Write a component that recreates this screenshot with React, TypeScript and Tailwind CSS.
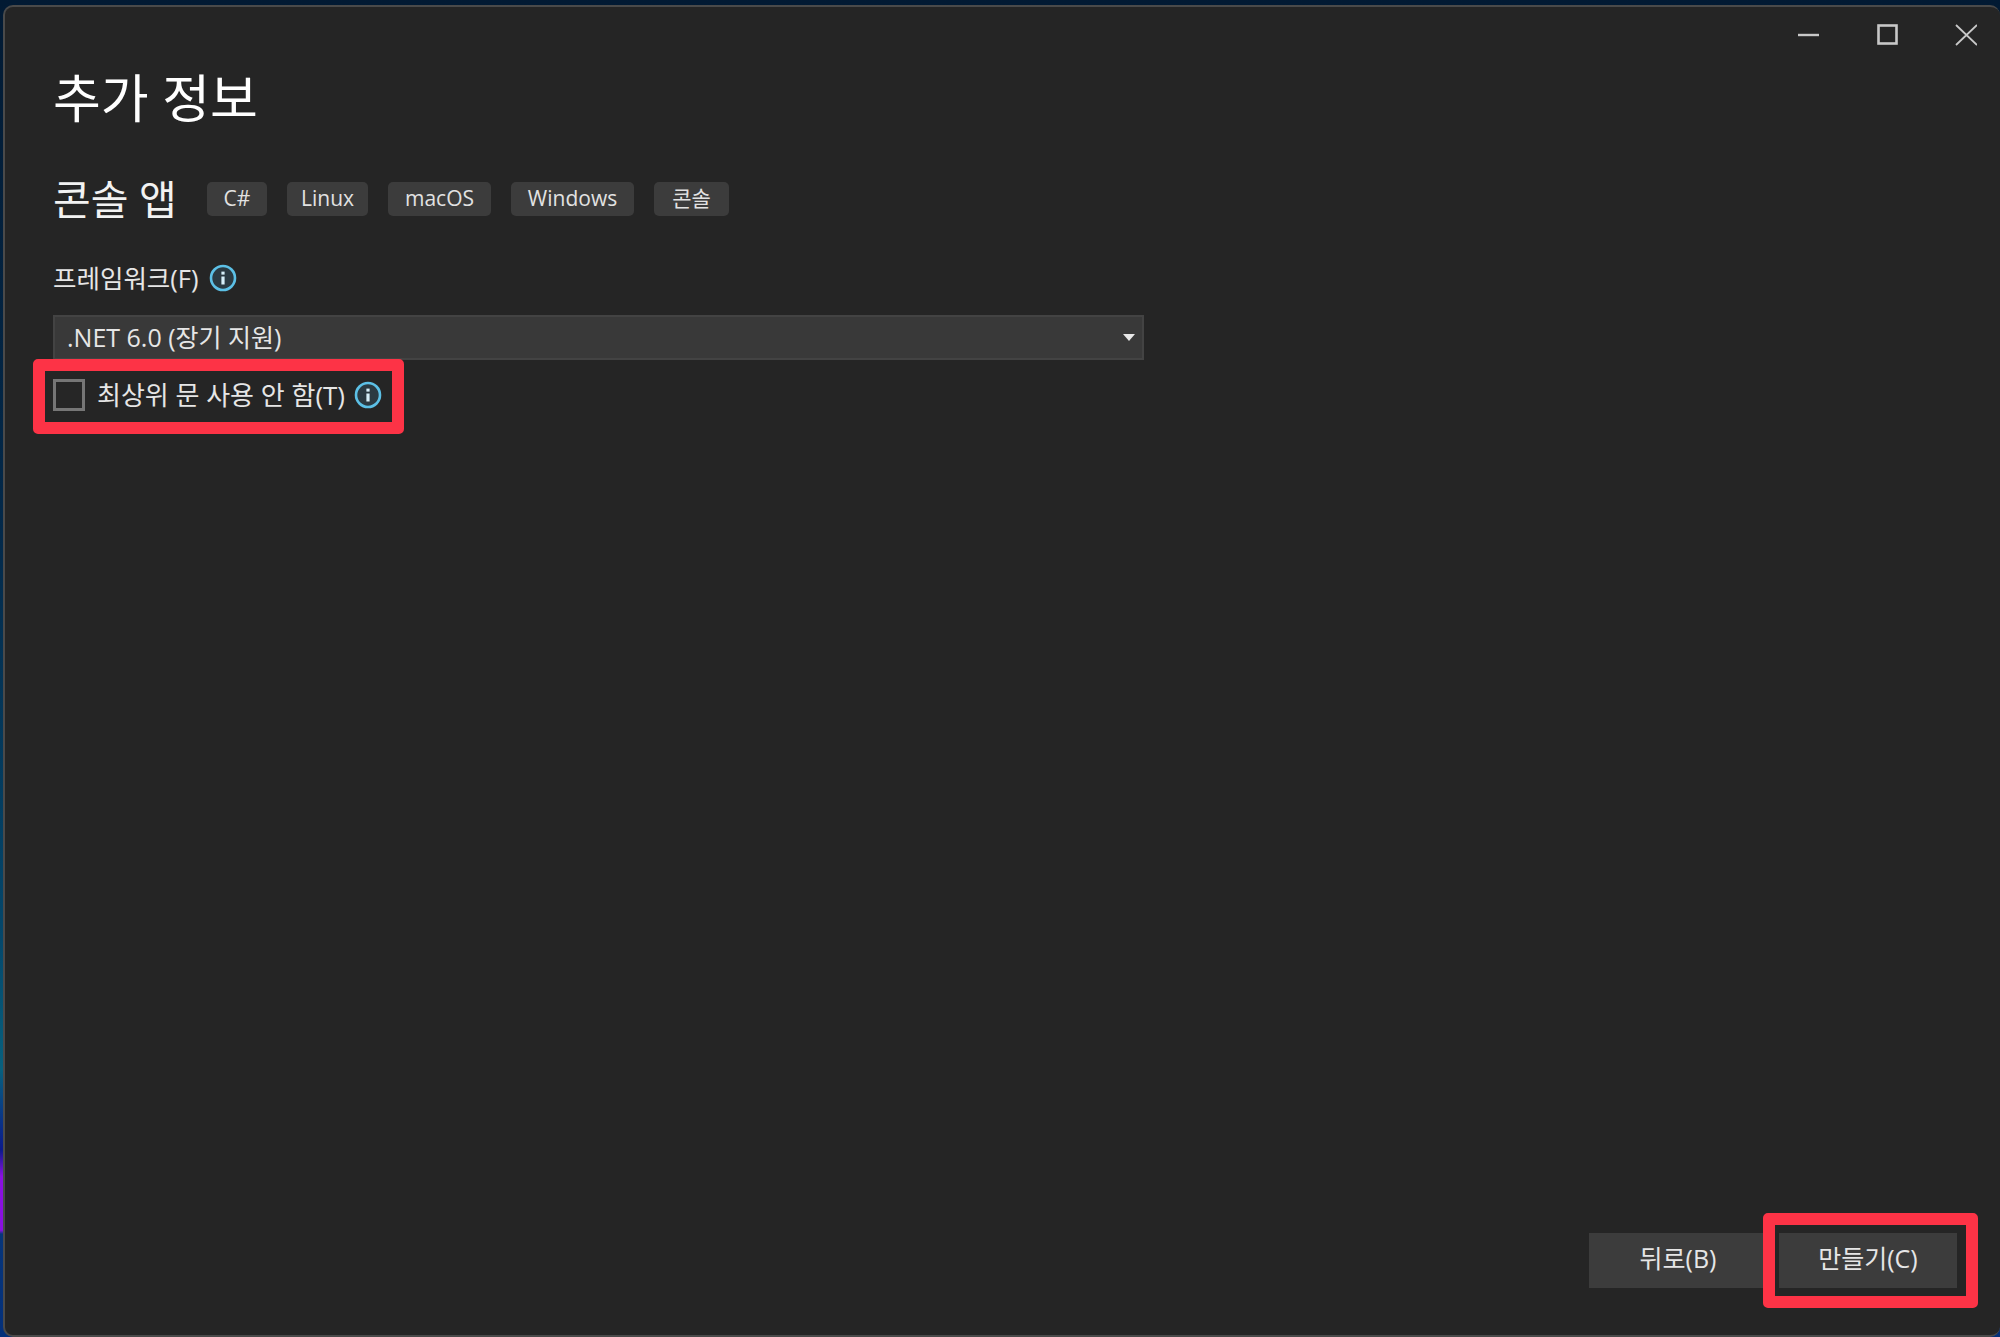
const sans = "font-['Open_Sans','Noto_Sans_CJK_KR',sans-serif]";

function InfoIcon() {
  return (
    <svg width="28" height="28" viewBox="0 0 28 28" className="shrink-0">
      <circle cx="14" cy="14" r="12" fill="#2b3a42" stroke="#5cc0e6" strokeWidth="2.6" />
      <rect x="12.4" y="12.5" width="3.2" height="8" fill="#d6eef8" />
      <rect x="12.4" y="7.6" width="3.2" height="3" fill="#d6eef8" />
    </svg>
  );
}

function Tag({ label, width }: { label: string; width: string }) {
  return (
    <span className={`flex h-[34px] items-center justify-center rounded-[5px] bg-[#3c3c3c] text-[21px] text-[#e2e2e2] ${width}`}>
      {label}
    </span>
  );
}

export default function App() {
  return (
    <div className={`h-[1337px] w-[2000px] overflow-hidden bg-[linear-gradient(180deg,#021a33_0%,#03294a_40%,#04476b_70%,#07607e_80%,#0a1a8c_86%,#8a10e0_88%,#8a10e0_92%,#06357a_92.3%,#04307a_100%)] pl-[3px] pt-[5px] ${sans}`}>
      <div className="flex h-[1332px] flex-col rounded-[10px] border-t-2 border-b-2 border-l-2 border-[#4a4a4a] bg-[#252525] text-[#e6e6e6]">
        <div className="flex justify-end pr-[23px] pt-[17px]">
          <svg width="179" height="22" viewBox="0 0 179 22" className="text-[#c8c8c8]" fill="none" stroke="currentColor">
            <path d="M0 11H21" strokeWidth="2.4" />
            <rect x="80.5" y="1.5" width="18" height="18" strokeWidth="2.6" />
            <path d="M158 1L179 21M179 1L158 21" strokeWidth="1.8" />
          </svg>
        </div>

        <div className="flex flex-1 flex-col pl-[48px]">
          <h1 className="mt-[17px] h-[70px] text-[52px] leading-[70px] font-normal text-white">추가 정보</h1>

          <div className="mt-[46px] flex h-[40px] items-center">
            <h2 className="w-[154px] text-[41px] leading-[40px] font-normal text-[#f2f2f2]">콘솔 앱</h2>
            <div className="flex gap-[20px]">
              <Tag label="C#" width="w-[60px]" />
              <Tag label="Linux" width="w-[81px]" />
              <Tag label="macOS" width="w-[103px]" />
              <Tag label="Windows" width="w-[123px]" />
              <Tag label="콘솔" width="w-[75px]" />
            </div>
          </div>

          <div className="mt-[45px] flex h-[28px] items-center gap-[10px] text-[25.5px]">
            <span>프레임워크(F)</span>
            <InfoIcon />
          </div>

          <div className="mt-[23px] flex h-[45px] w-[1091px] items-center justify-between border-2 border-[#434343] bg-[#393939] pl-[12px] pr-[7px] text-[25px]">
            <span>.NET 6.0 (장기 지원)</span>
            <svg width="12" height="7" viewBox="0 0 12 7"><path d="M0 0H12L6 7Z" fill="#e8e8e8" /></svg>
          </div>

          <div className="relative mt-[19px] flex h-[32px] w-[331px] items-center text-[26px]">
            <span className="size-[32px] shrink-0 border-[3px] border-[#767676] bg-[#262626]" />
            <span className="ml-[12px] whitespace-nowrap">최상위 문 사용 안 함(T)</span>
            <span className="ml-[9px]"><InfoIcon /></span>
            <div className="pointer-events-none absolute -top-[20px] -right-[20px] -bottom-[23px] -left-[20px] rounded-[5px] border-[12px] border-[#fd3346]" />
          </div>

          <div className="mt-auto mb-[47px] flex justify-end gap-[12px] pr-[43px] text-[25px]">
            <button className="h-[55px] w-[178px] bg-[#3c3c3c] pb-[3px] text-[#e6e6e6]">뒤로(B)</button>
            <div className="relative">
              <button className="h-[55px] w-[178px] bg-[#3c3c3c] pb-[3px] text-[#e6e6e6]">만들기(C)</button>
              <div className="pointer-events-none absolute -top-[20px] -right-[21px] -bottom-[20px] -left-[16px] rounded-[5px] border-[12px] border-[#fd3346]" />
            </div>
          </div>
        </div>
      </div>
    </div>
  );
}
